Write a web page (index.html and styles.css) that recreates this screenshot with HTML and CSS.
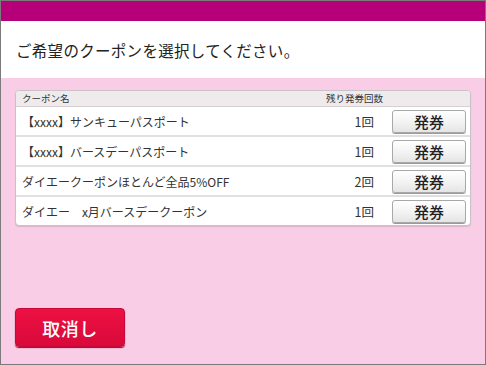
FILE: index.html
```html
<!DOCTYPE html>
<html lang="ja">

<head>
    <meta charset="UTF-8">
    <meta name="viewport" content="width=device-width, initial-scale=1.0">
    <title>クーポン選択</title>
    <link rel="stylesheet" href="styles.css">
</head>

<body>
    <div class="screen">
        <div class="top-bar"></div>
        <div class="title-area">
            <h1 class="title">ご希望のクーポンを選択してください。</h1>
        </div>
        <div class="main">
            <table class="coupons">
                <thead>
                    <tr>
                        <th class="col-name">クーポン名</th>
                        <th class="col-count">残り発券回数</th>
                        <th class="col-action"></th>
                    </tr>
                </thead>
                <tbody>
                    <tr>
                        <td class="col-name">【xxxx】サンキューパスポート</td>
                        <td class="col-count">1回</td>
                        <td class="col-action"><button class="issue-btn">発券</button></td>
                    </tr>
                    <tr>
                        <td class="col-name">【xxxx】バースデーパスポート</td>
                        <td class="col-count">1回</td>
                        <td class="col-action"><button class="issue-btn">発券</button></td>
                    </tr>
                    <tr>
                        <td class="col-name">ダイエークーポンほとんど全品5%OFF</td>
                        <td class="col-count">2回</td>
                        <td class="col-action"><button class="issue-btn">発券</button></td>
                    </tr>
                    <tr>
                        <td class="col-name">ダイエー　x月バースデークーポン</td>
                        <td class="col-count">1回</td>
                        <td class="col-action"><button class="issue-btn">発券</button></td>
                    </tr>
                </tbody>
            </table>
            <button class="cancel-btn">取消し</button>
        </div>
    </div>
</body>

</html>
```

FILE: styles.css
```css
html,
body {
    margin: 0;
    height: 100%;
}

body {
    font-family: "Noto Sans CJK JP", "Noto Sans", sans-serif;
    color: #333;
}

.screen {
    height: 100vh;
    box-sizing: border-box;
    border: 1px solid #7a7a7a;
    display: flex;
    flex-direction: column;
}

.top-bar {
    height: 20px;
    background-color: #b5007a;
}

.title-area {
    height: 57px;
    background-color: #fff;
    display: flex;
    align-items: center;
    padding-left: 15px;
}

.title {
    margin: 0;
    font-size: 15.5px;
    font-weight: 400;
    letter-spacing: 0.3px;
    color: #222;
}

.main {
    flex: 1;
    background-color: #f9cde5;
    padding: 12px 15px 17px 14px;
    display: flex;
    flex-direction: column;
    align-items: flex-start;
}

.coupons {
    width: 456px;
    border-collapse: separate;
    border-spacing: 0;
    background-color: #fff;
    border: 1px solid #c9c2c6;
    border-radius: 4px;
    overflow: hidden;
    box-shadow: 0 1px 1px rgba(0, 0, 0, 0.12);
}

.coupons th {
    height: 15px;
    padding: 0;
    background-color: #efebec;
    font-size: 9.5px;
    font-weight: 400;
    color: #333;
    border-bottom: 1px solid #d6d0d3;
    line-height: 15px;
}

.coupons td {
    height: 28px;
    padding: 0;
    font-size: 12px;
    border-bottom: 2px solid #e2dfe0;
}

.coupons tbody tr:last-child td {
    border-bottom: none;
}

.col-name {
    text-align: left;
    padding-left: 6px !important;
}

.coupons th.col-count {
    text-align: right;
    padding-right: 0;
}

.coupons td.col-count {
    text-align: right;
    padding-right: 9px;
    width: 60px;
    font-size: 12.5px;
}

.col-action {
    width: 83px;
    text-align: right;
}

.coupons td.col-action {
    padding-right: 4px;
}

.issue-btn {
    width: 74px;
    height: 23px;
    display: block;
    margin-left: auto;
    font-family: inherit;
    font-size: 15px;
    font-weight: 500;
    color: #222;
    line-height: 1;
    padding: 0;
    background: linear-gradient(#ffffff, #f1f1f1 60%, #e4e4e4);
    border: 1px solid #a8a8a8;
    border-radius: 3px;
    box-shadow: 0 1px 0 #9a9a9a;
}

.cancel-btn {
    margin-top: auto;
    width: 110px;
    height: 39px;
    font-family: inherit;
    font-size: 18px;
    font-weight: 500;
    color: #fff;
    letter-spacing: 0.5px;
    background: linear-gradient(#ec1142, #d9093a);
    border: 1px solid #c8073a;
    border-radius: 4px;
    box-shadow: 0 1px 1px #7d1030;
}
```
